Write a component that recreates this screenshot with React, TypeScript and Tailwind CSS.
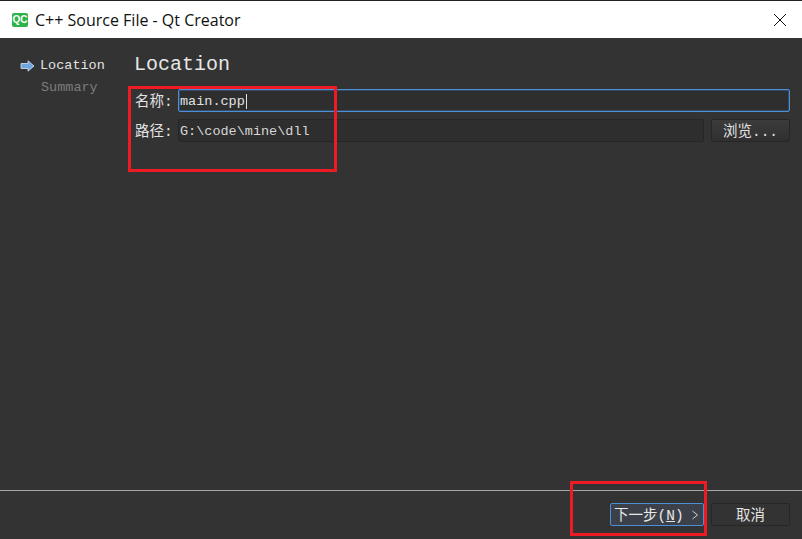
const mono = 'font-["Liberation_Mono","Noto_Sans_CJK_SC",monospace]'

function QtIcon() {
  return (
    <div className='flex h-[14px] w-[16px] items-center justify-center rounded-[2px] bg-[#2cb34a] font-["Liberation_Sans",sans-serif] text-[10px] font-bold leading-none text-white'>
      QC
    </div>
  )
}

function StepArrow() {
  return (
    <svg width="15" height="12" viewBox="0 0 15 12">
      <path d="M1 3.5H8V0.8L14 6L8 11.2V8.5H1Z" fill="#6ea6e0" stroke="#d5e4f5" strokeWidth="0.8" />
    </svg>
  )
}

function Field({ label, children }: { label: string; children: React.ReactNode }) {
  return (
    <div className="flex h-[23px] items-center">
      <span className="w-[44px] pl-[1px] pt-[2px] text-[14.5px] leading-[20px] text-[#e2e2e2]">{label}</span>
      {children}
    </div>
  )
}

export default function App() {
  return (
    <div className={`relative flex h-[539px] w-[802px] flex-col overflow-hidden border-t border-[#222] bg-[#333333] ${mono}`}>
      <header className="flex h-[37px] shrink-0 items-center bg-white pl-[12px] pr-[15px]">
        <QtIcon />
        <span className='ml-[7px] font-["Open_Sans","Liberation_Sans",sans-serif] text-[16px] text-[#111]'>
          C++ Source File - Qt Creator
        </span>
        <svg className="ml-auto" width="14" height="14" viewBox="0 0 14 14">
          <path d="M1 1L13 13M13 1L1 13" stroke="#111" strokeWidth="1" fill="none" />
        </svg>
      </header>

      <div className="flex min-h-0 flex-1">
        <aside className="w-[134px] shrink-0 pl-[20px] pt-[17px] text-[13.5px] leading-[22px]">
          <div className="flex items-center gap-[5px] text-[#e2e2e2]">
            <StepArrow />
            <span>Location</span>
          </div>
          <div className="pl-[21px] text-[#7c7c7c]">Summary</div>
        </aside>

        <main className="min-w-0 flex-1 pr-[12px] pt-[14px]">
          <h1 className="text-[20px] leading-[26px] text-[#e6e6e6]">Location</h1>
          <div className="mt-[11px] flex flex-col gap-[7px]">
            <Field label="名称:">
              <div className="flex h-[23px] flex-1 items-center rounded-[2px] border border-[#4a90d9] bg-[#2e2e2e] pl-[1px] pt-[2px] text-[13.5px] leading-[18px] text-[#e2e2e2] shadow-[inset_0_0_0_1px_rgba(74,144,217,0.3)]">
                main.cpp
                <span className="ml-[1px] h-[15px] w-px bg-[#e2e2e2]" />
              </div>
            </Field>
            <Field label="路径:">
              <div className="flex h-[23px] flex-1 items-center rounded-[2px] border border-[#262626] bg-[#2e2e2e] pl-[1px] pt-[2px] text-[13.5px] leading-[18px] text-[#d6d6d6]">
                G:\code\mine\dll
              </div>
              <button
                type="button"
                className="ml-[7px] h-[23px] w-[79px] rounded-[2px] border border-[#262626] bg-gradient-to-b from-[#3c3c3c] to-[#2f2f2f] pt-[2px] text-[14.5px] leading-[18px] text-[#e2e2e2]"
              >
                浏览...
              </button>
            </Field>
          </div>
        </main>
      </div>

      <footer className="h-[49px] shrink-0 border-t border-[#a8a8a8] pr-[12px] pt-[12px]">
        <div className="flex justify-end gap-[7px]">
          <button
            type="button"
            className="flex h-[23px] w-[94px] items-center justify-between rounded-[2px] border border-[#4a90d9] bg-[#3c4149] pl-[3px] pr-[4px] text-[14.5px] leading-[18px] text-[#e8e8e8]"
          >
            <span className="pt-[2px]">
              下一步(<span className="underline">N</span>)
            </span>
            <svg width="8" height="10" viewBox="0 0 8 10">
              <path d="M1.5 1L6.5 5L1.5 9" stroke="#d0d0d0" fill="none" />
            </svg>
          </button>
          <button
            type="button"
            className="h-[23px] w-[79px] rounded-[2px] border border-[#262626] bg-[#333333] pt-[2px] text-[14.5px] leading-[18px] text-[#e2e2e2]"
          >
            取消
          </button>
        </div>
      </footer>

      {/* red annotation boxes drawn over the dialog */}
      <div className="absolute left-[128px] top-[85px] h-[86px] w-[209px] border-[3px] border-[#ed1c24]" />
      <div className="absolute left-[570px] top-[480px] h-[55px] w-[137px] border-[3px] border-[#ed1c24]" />
    </div>
  )
}
